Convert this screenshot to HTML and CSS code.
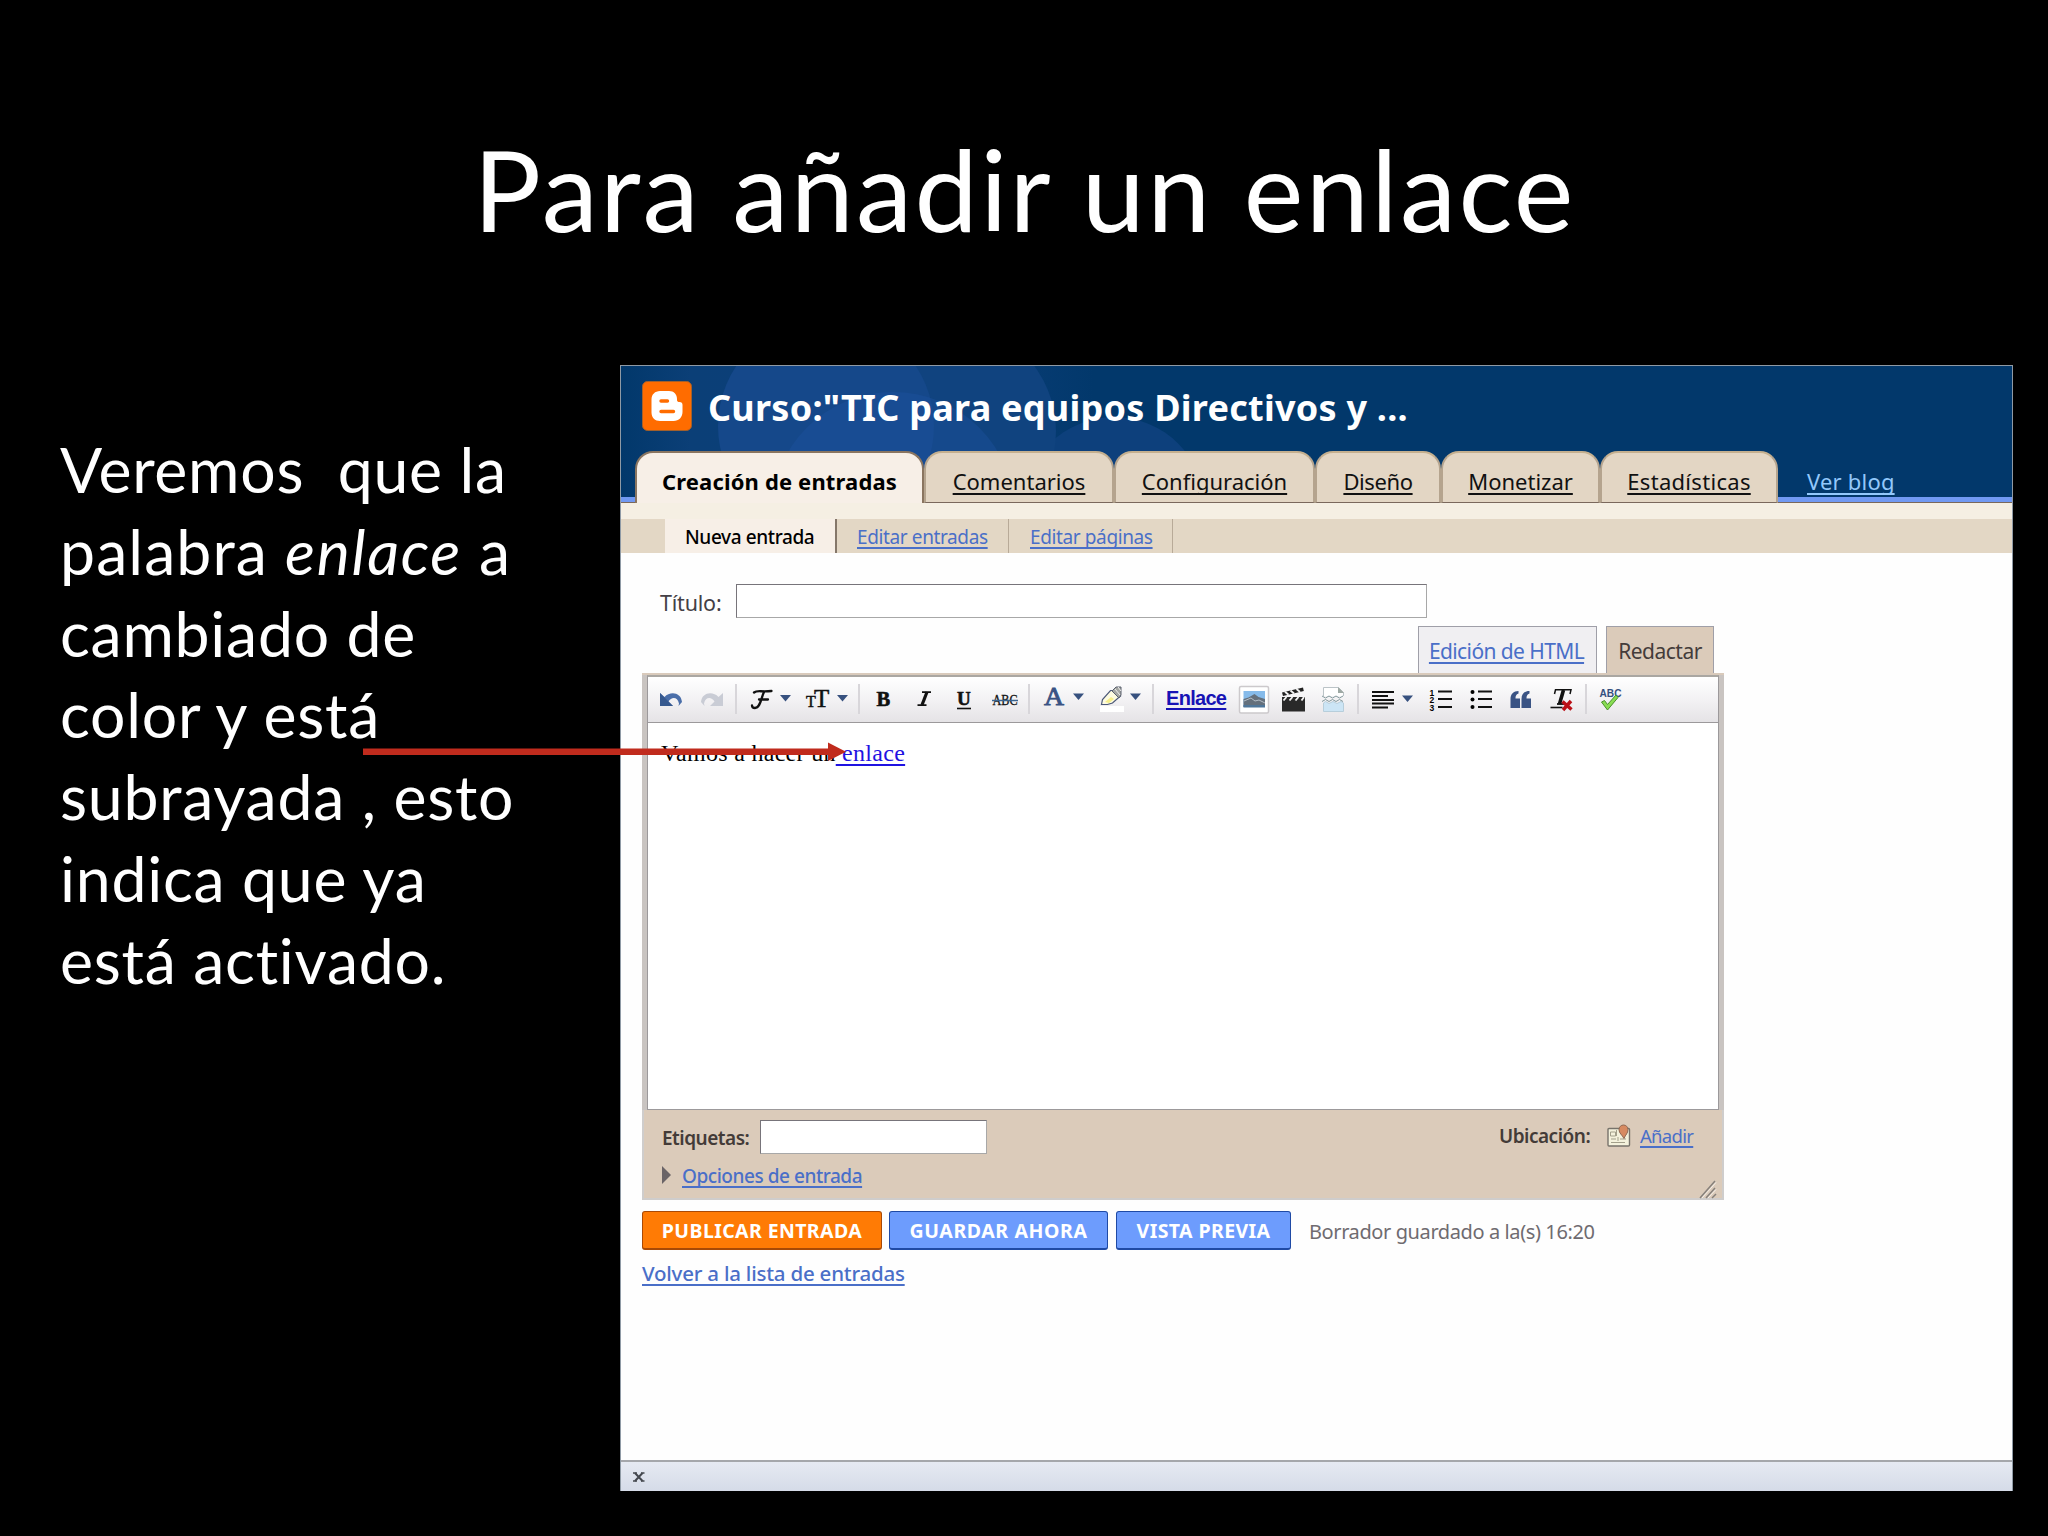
FILE: index.html
```html
<!DOCTYPE html>
<html lang="es">
<head>
  <meta charset="UTF-8">
  <title>Para añadir un enlace</title>
  <link rel="stylesheet" href="styles.css">
</head>
<body>
  <div class="slide">
    <h1>Para añadir un enlace</h1>

    <div class="content">
      <div class="note">
        Veremos&nbsp; que la<br>
        <span class="wide">palabra <em>enlace</em> a</span><br>
        cambiado de<br>
        color y está<br>
        subrayada , esto<br>
        indica que ya<br>
        está activado.
      </div>

      <div class="window">
        <div class="header">
          <svg class="circles" width="1391" height="131" viewBox="0 0 1391 131">
            <defs>
              <linearGradient id="glow" x1="0" x2="1" y1="0" y2="0">
                <stop offset="0" stop-color="#02386b"/>
                <stop offset="0.05" stop-color="#0b3f77"/>
                <stop offset="0.24" stop-color="#0b3f7a"/>
                <stop offset="0.34" stop-color="#02386b"/>
              </linearGradient>
            </defs>
            <rect width="1391" height="131" fill="url(#glow)"/>
            <circle cx="493" cy="142" r="91" fill="#0d407c"/>
            <circle cx="327" cy="65" r="108" fill="#10437f"/>
            <circle cx="205" cy="60" r="108" fill="#15488a"/>
            <circle cx="272" cy="148" r="122" fill="#1d52a0" opacity="0.4"/>
          </svg>
          <div class="brand">
            <svg class="logo" width="50" height="50" viewBox="0 0 50 50">
              <rect x="0.5" y="0.5" width="49" height="49" rx="5" fill="#ff6c00" stroke="#a2602c"/>
              <path d="M18 10h9c5 0 8 3.500 8 8v1c0 1.500 1 2 2.500 2 2 0 3 1 3 3v7c0 5-3.500 9-9 9H18c-5 0-8.500-3.500-8.500-8.500V18.500C9.500 13.500 13 10 18 10z" fill="#fff"/>
              <path d="M19 20h6.500M19 30.500h12.500" stroke="#ff6c00" stroke-width="3.400" stroke-linecap="round"/>
            </svg>
            <span class="blog-title">Curso:"TIC para equipos Directivos y ...</span>
          </div>
          <div class="tabs">
            <div class="tab active creacion">Creación de entradas</div>
            <div class="tab comentarios"><a>Comentarios</a></div>
            <div class="tab configuracion"><a>Configuración</a></div>
            <div class="tab diseno"><a>Diseño</a></div>
            <div class="tab monetizar"><a>Monetizar</a></div>
            <div class="tab estadisticas"><a>Estadísticas</a></div>
            <a class="ver-blog">Ver blog</a>
          </div>
        </div>

        <div class="subtabs">
          <div class="subtab current">Nueva entrada</div>
          <div class="subtab entradas"><a>Editar entradas</a></div>
          <div class="subtab paginas"><a>Editar páginas</a></div>
        </div>

        <div class="main">
          <div class="title-row">
            <label>Título:</label>
            <div class="field title-field"></div>
          </div>

          <div class="modes">
            <div class="mode html-mode"><a>Edición de HTML</a></div>
            <div class="mode compose">Redactar</div>
          </div>

          <div class="editor">
            <div class="toolbar">
              <!-- undo / redo -->
              <svg width="42" height="45" viewBox="0 0 42 45">
                <path d="M11 16v13h13l-4.500-4.500c3-5 9-5 10.500 2l-.5 2.500 3.500-4C32 15 21 14 15.500 20z" fill="#4a6ea9"/>
                <path d="M11 16v13h13z" fill="#36598f"/>
              </svg>
              <svg width="44" height="45" viewBox="0 0 44 45">
                <path d="M32 16v13H19l4.500-4.500c-3-5-9-5-10.500 2l.5 2.500-3.500-4C11 15 22 14 27.500 20z" fill="#c9ccd5"/>
              </svg>
              <i class="sep"></i>
              <svg width="59" height="45" viewBox="0 0 59 45">
                <path d="M17 15.500c3-2.500 6-.5 17.500-1.500M27 15c-3 6-3.500 16-9 16-2 0-3-1-3-2.500M22 22.500h9" fill="none" stroke="#111" stroke-width="2.300" stroke-linecap="round"/>
                <path d="M43 18h11l-5.500 6.500z" fill="#37517f"/>
              </svg>
              <svg width="62" height="45" viewBox="0 0 62 45">
                <text x="10" y="30" class="serif" font-size="16">T</text>
                <text x="18" y="30" class="serif" font-size="25">T</text>
                <path d="M41 18h11l-5.500 6.500z" fill="#37517f"/>
              </svg>
              <i class="sep"></i>
              <svg width="44" height="45" viewBox="0 0 44 45">
                <text x="16.500" y="29" class="serif heavy" font-size="20.500">B</text>
              </svg>
              <svg width="40" height="45" viewBox="0 0 40 45">
                <path d="M18 15.200h9M13.500 28.200h9" stroke="#111" stroke-width="1.800"/>
                <path d="M23 15l-5 13" stroke="#111" stroke-width="3.200"/>
              </svg>
              <svg width="39" height="45" viewBox="0 0 39 45">
                <text x="13" y="28" class="serif heavy" font-size="19">U</text>
                <path d="M13 31.500h14" stroke="#111" stroke-width="1.600"/>
              </svg>
              <svg width="45" height="45" viewBox="0 0 45 45">
                <text x="9.500" y="28" class="serif strike" font-size="14.500" textLength="25" lengthAdjust="spacingAndGlyphs">ABC</text>
                <path d="M9 23.500h26" stroke="#3b6590" stroke-width="1.500"/>
              </svg>
              <i class="sep"></i>
              <svg width="62" height="45" viewBox="0 0 62 45">
                <text x="14" y="27.500" font-size="25" fill="#3a5384" class="serif-blue" textLength="20" lengthAdjust="spacingAndGlyphs">A</text>
                <path d="M43 16.500h11l-5.500 6.500z" fill="#37517f"/>
              </svg>
              <svg width="60" height="45" viewBox="0 0 60 45">
                <path d="M8 29h24v6H8z" fill="#fff"/>
                <path d="M9.500 27.500l1-5 8-9h4l6 5.500-8 7-5 1.500z" fill="#fdfbe0" stroke="#4b5878" stroke-width="1.200"/>
                <path d="M13 25l6-5 3 2-5 4z" fill="#f7ef8a"/>
                <path d="M20 14l4-4 5 0v8l-2 3z" fill="#a5a7a3" stroke="#5a616e"/>
                <path d="M23 12l5 6M26 10l3 4" stroke="#eee"/>
                <path d="M38 16.500h11l-5.500 6.500z" fill="#37517f"/>
              </svg>
              <i class="sep"></i>
              <a class="link-button">Enlace</a>
              <!-- image -->
              <svg width="39" height="45" viewBox="0 0 39 45">
                <rect x="5.500" y="9.500" width="29" height="26.500" rx="1.500" fill="#fff" stroke="#ccc9cc" stroke-width="1.500"/>
                <rect x="9.500" y="14" width="21.500" height="16" fill="#86bbea"/>
                <path d="M9.500 22l5-1.500 6-3.500 4 3 6.500 2v8H9.500z" fill="#64707c"/>
                <path d="M10 24l7-3 4 3 4-1 6 3" stroke="#b3bdc6" fill="none"/>
                <path d="M9.500 28h21.500v2.500H9.500z" fill="#4f7699"/>
              </svg>
              <!-- video -->
              <svg width="40" height="45" viewBox="0 0 40 45">
                <path d="M9 20h23v14.500H9z" fill="#292929"/>
                <path d="M9 15.500l21-5 .8 3.500L10 19z" fill="#222"/>
                <path d="M12 14.800l3.500 3M17.500 13.500l3.500 3M23.500 12l3.500 3M13.500 20l-3 3.500M19.500 20l-3 3.500M25.500 20l-3 3.500M31 20l-2.500 3.500" stroke="#f2f2f2" stroke-width="1.900"/>
              </svg>
              <!-- page break -->
              <svg width="44" height="45" viewBox="0 0 44 45">
                <path d="M10.500 19v-8.500h15l5 5V19" fill="#fff" stroke="#bbc3c7"/>
                <path d="M25 10l6 6h-6z" fill="#9ea9a4"/>
                <path d="M10.500 26v8.500h20V26l-2.500-1.500-4 2-4-2-4 2-3.500-2z" fill="#cce5f5" stroke="#b7cedb"/>
                <path d="M9 19l3.500 2 3.500-2 3.500 2 3.500-2 3.500 2 3.500-2M9 24.500l3.500-2 3.500 2 3.500-2 3.500 2 3.500-2 3.500 2" stroke="#83999d" fill="none"/>
              </svg>
              <i class="sep"></i>
              <svg width="62" height="45" viewBox="0 0 62 45">
                <path d="M13 15h22M13 19h16M13 23h22M13 26.500h22M13 30.500h16" stroke="#111" stroke-width="1.800"/>
                <path d="M43 18.500h11l-5.500 6.500z" fill="#37517f"/>
              </svg>
              <svg width="40" height="45" viewBox="0 0 40 45">
                <text x="8.500" y="18.500" class="num">1</text>
                <text x="8.500" y="26" class="num">2</text>
                <text x="8.500" y="34" class="num">3</text>
                <path d="M17 14.500h14M17 22h14M17 30h14" stroke="#111" stroke-width="1.900"/>
              </svg>
              <svg width="40" height="45" viewBox="0 0 40 45">
                <path d="M17 14.500h14M17 22h14M17 30h14" stroke="#111" stroke-width="1.900"/>
                <circle cx="11.500" cy="15" r="2"/>
                <circle cx="11.500" cy="22.500" r="2"/>
                <circle cx="11.500" cy="30" r="2"/>
              </svg>
              <svg width="40" height="45" viewBox="0 0 40 45">
                <path d="M9.500 31V22c0-5 3-8 8-8v2.500c-2.500 1-3 2.500-3 5H19V31zM20.500 31V22c0-5 3-8 8-8v2.500c-2.500 1-3 2.500-3 5H30V31z" fill="#3a5384"/>
              </svg>
              <svg width="44" height="45" viewBox="0 0 44 45">
                <path d="M13.500 17l1-4.200h15.500l-1 4.200" fill="none" stroke="#111" stroke-width="1.500"/>
                <path d="M16 27h7" stroke="#111" stroke-width="1.800"/>
                <path d="M22.500 13l-4 14" stroke="#111" stroke-width="3.600"/>
                <path d="M9.500 30.500h12" stroke="#111" stroke-width="1.600"/>
                <path d="M21.500 24.500l9 8M30 24l-8 9" stroke="#bb1017" stroke-width="3.400"/>
              </svg>
              <i class="sep"></i>
              <svg width="50" height="45" viewBox="0 0 50 45">
                <text x="12.500" y="20" class="spell" textLength="22" lengthAdjust="spacingAndGlyphs">ABC</text>
                <path d="M14.500 25l3-1.500 3 4 8.500-9.500 2 2.500-10.500 12.500z" fill="#88dd52" stroke="#4b8f2c"/>
              </svg>
            </div>

            <div class="text-area">Vamos a hacer un<a> enlace</a></div>

            <div class="post-options">
              <div class="labels-row">
                <label>Etiquetas:</label>
                <div class="field labels-field"></div>
                <span class="location">Ubicación:</span>
                <svg class="map" width="24" height="24" viewBox="0 0 24 24">
                  <rect x="1" y="4.500" width="21.500" height="17.500" rx="1" fill="#f4f2dc" stroke="#77736b" stroke-width="1.400"/>
                  <path d="M3.500 8h5v4h-5zM4 15h5M11 13v4M4 18.500h14M13 15h6M9.500 6v6" fill="none" stroke="#a3a08b"/>
                  <path d="M12 5.500a4.500 4.500 0 0 1 9 0c0 4-2.500 5-4 9-2-4-5-5-5-9z" fill="#d78a61" stroke="#8f6954"/>
                </svg>
                <a class="add">Añadir</a>
              </div>
              <div class="options-row">
                <i class="triangle"></i>
                <a>Opciones de entrada</a>
                <svg class="grip" width="20" height="19" viewBox="0 0 20 19">
                  <path d="M2 18L17 1M8 18l9-10M14 18l4-4" stroke="#86807b" stroke-width="1.500"/>
                  <path d="M4 18L18 2.500M10 18l8-8.500" stroke="#f6f0ea"/>
                </svg>
              </div>
            </div>
          </div>

          <div class="actions">
            <div class="button publish">PUBLICAR ENTRADA</div>
            <div class="button save">GUARDAR AHORA</div>
            <div class="button preview">VISTA PREVIA</div>
            <span class="status">Borrador guardado a la(s) 16:20</span>
          </div>
          <a class="back">Volver a la lista de entradas</a>
        </div>

        <div class="statusbar">
          <svg width="12" height="10" viewBox="0 0 12 10">
            <path d="M2 1l7.500 8M9.500 1L2 9" stroke="#44484f" stroke-width="2"/>
            <path d="M0 1h4M8 1h3.500M0 9h4M8 9h3.500" stroke="#44484f" stroke-width="1.500"/>
          </svg>
        </div>
      </div>
    </div>

    <svg class="arrow" width="484" height="20" viewBox="0 0 484 20">
      <path d="M0 6.500h465V0.500l18 9.300-18 9.200v-6H0z" fill="#c02b1d"/>
    </svg>
  </div>
</body>
</html>
```
FILE: styles.css
```css
* {
  box-sizing: border-box;
}

body {
  margin: 0;
  background: #000;
}

.slide {
  position: relative;
  width: 2048px;
  height: 1536px;
  overflow: hidden;
  background: #000;
  color: #fff;
  font-family: Lato, sans-serif;
}

h1 {
  margin: 0;
  height: 365px;
  padding: 118px 0 0 1px;
  font-size: 113px;
  font-weight: 400;
  line-height: 140px;
  letter-spacing: 2.3px;
  text-align: center;
}

.content {
  display: flex;
}

.note {
  width: 620px;
  padding: 63px 0 0 60px;
  font-size: 62.5px;
  line-height: 81.8px;
  letter-spacing: 0.75px;
  white-space: nowrap;
}

.note .wide {
  letter-spacing: 1.1px;
}

.note em {
  letter-spacing: 1.7px;
}

.window {
  display: flex;
  flex-direction: column;
  width: 1393px;
  height: 1126px;
  border: 1px solid #8f9aa5;
  border-bottom: 0;
  background: #fefefe;
  color: #000;
  font-family: "Noto Sans", sans-serif;
}

.window a {
  color: #4a6fc8;
  text-decoration: underline;
  text-decoration-thickness: 1.5px;
  text-underline-offset: 3px;
  text-decoration-skip-ink: none;
}

/* header */
.header {
  position: relative;
  height: 137px;
  background: #02386b;
}

.circles {
  position: absolute;
  top: 0;
  left: 0;
}

.brand {
  position: relative;
  display: flex;
  height: 85px;
  padding: 15px 0 0 21px;
}

.blog-title {
  margin-left: 16px;
  padding-top: 1px;
  color: #fff;
  font-size: 36px;
  font-weight: 700;
  line-height: 52px;
  letter-spacing: 0.25px;
}

.tabs {
  position: relative;
  display: flex;
  height: 52px;
  padding-left: 14px;
  background: linear-gradient(transparent 46px, #7199f2 46px, #7199f2 51px, #7a685c 51px);
}

.tab {
  height: 52px;
  padding-top: 10px;
  border: 2px solid #b5a48e;
  border-top-color: #c5b08f;
  border-bottom: 1px solid #7a685c;
  border-radius: 18px 18px 0 0;
  background: #e3d6c4;
  font-size: 22px;
  line-height: 36px;
  text-align: center;
  white-space: nowrap;
}

.tab a {
  color: #111;
}

.tab.active {
  border-color: #8a7560;
  border-bottom: 0;
  background: #f7efe7;
  font-weight: 700;
  letter-spacing: 0.15px;
}

.creacion { width: 289px; }
.comentarios { width: 190px; }
.configuracion { width: 201px; }
.diseno { width: 126px; letter-spacing: -0.4px; }
.monetizar { width: 159px; }
.estadisticas { width: 178px; letter-spacing: 0.3px; }

.window .ver-blog {
  margin-left: 29px;
  color: #93c8fb;
  font-size: 22px;
  line-height: 60px;
  letter-spacing: 0.2px;
}

/* second row of tabs */
.subtabs {
  display: flex;
  height: 50px;
  padding: 16px 0 0 44px;
  background: linear-gradient(#f5efe3 16px, #e3d7c5 16px);
}

.subtab {
  padding-left: 20px;
  border-right: 1px solid #b8aa98;
  font-size: 19px;
  line-height: 36px;
  letter-spacing: -0.38px;
}

.current {
  width: 172px;
  border-right: 2px solid #85776a;
  background: #f7efe7;
  font-weight: 500;
}

.entradas { width: 172px; }
.paginas { width: 164px; padding-left: 21px; }

/* post form */
.main {
  flex: 1;
  padding: 31px 0 0 21px;
}

.title-row {
  display: flex;
  height: 42px;
}

.title-row label {
  width: 94px;
  padding-left: 18px;
  color: #444046;
  font-size: 21.5px;
  line-height: 37px;
  letter-spacing: -0.2px;
}

.field {
  border: 1px solid #a8a8a8;
  border-top-color: #77747a;
  border-left-color: #77747a;
  background: #fff;
}

.title-field {
  width: 691px;
  height: 34px;
}

.modes {
  display: flex;
  gap: 9px;
  height: 47px;
  padding-left: 776px;
}

.mode {
  border: 1px solid #9f9fa8;
  border-bottom: 0;
  font-size: 21px;
  line-height: 48px;
  letter-spacing: -0.5px;
  text-align: center;
}

.html-mode {
  width: 179px;
  padding-right: 2px;
  background: #f0eff2;
}

.html-mode a {
  letter-spacing: -0.6px;
}

.compose {
  width: 108px;
  background: #dbcbba;
  color: #443c3a;
}

.editor {
  width: 1082px;
  height: 527px;
  border-top: 2px solid #d9cabb;
  background: #c9c4c1;
}

.toolbar {
  display: flex;
  width: 1072px;
  height: 48px;
  margin: 0 0 0 5px;
  padding-left: 1px;
  border: 1px solid #9c999b;
  border-top: 2px solid #aaa7a2;
  background: linear-gradient(#fff, #f3f2f4 50%, #e5e3e6);
}

.toolbar svg {
  flex: none;
}

.sep {
  width: 2px;
  height: 30px;
  margin-top: 7px;
  background: #d8d6da;
}

.serif {
  fill: #111;
  stroke: #111;
  stroke-width: 0.5px;
  font-family: "Liberation Serif", serif;
}

.strike {
  stroke-width: 0.3px;
}

.serif-blue {
  font-family: "Liberation Serif", serif;
}

.heavy {
  font-weight: 700;
  stroke-width: 0.6px;
}

.serif-blue {
  stroke: #3a5384;
  stroke-width: 0.8px;
}

.num {
  font: 700 8.5px "Liberation Sans", sans-serif;
}

.spell {
  fill: #35507f;
  font: 700 10.5px "Liberation Sans", sans-serif;
}

.toolbar .link-button {
  width: 80px;
  padding-left: 12px;
  color: #1713b5;
  font: 700 20px/42px "Liberation Sans", sans-serif;
  letter-spacing: -0.7px;
  text-decoration-thickness: 2px;
}

.text-area {
  width: 1072px;
  height: 387px;
  margin-left: 5px;
  padding: 16px 0 0 13px;
  border: 1px solid #9c999b;
  border-top: 0;
  background: #fff;
  font: 24px/28px "Liberation Serif", serif;
  letter-spacing: 0.3px;
}

.text-area a {
  color: #1f12e2;
}

.post-options {
  height: 90px;
  border: 2px solid #cfcdcc;
  border-top: 0;
  background: #dbcbba;
}

.labels-row {
  display: flex;
  height: 52px;
  padding: 10px 0 0 18px;
  color: #433b38;
  font-size: 19px;
  font-weight: 600;
  letter-spacing: -0.5px;
}

.labels-row label {
  width: 98px;
  line-height: 37px;
}

.labels-field {
  width: 227px;
  height: 34px;
}

.location {
  margin-left: 512px;
  width: 108px;
  line-height: 33px;
}

.map {
  margin-top: 4px;
}

.labels-row .add {
  margin-left: 9px;
  font-size: 18.5px;
  font-weight: 400;
  line-height: 31px;
  letter-spacing: -0.7px;
}

.options-row {
  display: flex;
  padding: 1px 4px 0 18px;
  font-size: 19px;
  font-weight: 500;
  line-height: 26px;
  letter-spacing: -0.45px;
}

.triangle {
  width: 0;
  height: 0;
  margin: 3px 11px 0 0;
  border: solid transparent;
  border-width: 9px 0 9px 9px;
  border-left-color: #6a6467;
}

.grip {
  margin: 17px 0 0 auto;
}

.actions {
  display: flex;
  height: 39px;
  margin-top: 11px;
}

.button {
  border: 1.5px solid #1f4aa5;
  border-bottom-width: 2px;
  border-radius: 3px;
  background: #6d9cfd;
  color: #fff;
  font-size: 19.5px;
  font-weight: 700;
  line-height: 37px;
  letter-spacing: 0.4px;
  text-align: center;
}

.publish {
  width: 240px;
  border-color: #a94a06;
  background: #ff7b05;
}

.save {
  width: 219px;
  margin: 0 8px 0 7px;
  letter-spacing: 0.6px;
}

.preview {
  width: 175px;
}

.status {
  margin-left: 18px;
  color: #6f6b70;
  font-size: 20px;
  line-height: 42px;
  letter-spacing: -0.4px;
}

.window .back {
  display: block;
  margin-top: 8px;
  font-size: 20.5px;
  font-weight: 500;
  line-height: 30px;
  letter-spacing: -0.22px;
}

.statusbar {
  height: 31px;
  padding: 10px 0 0 12px;
  border-top: 2px solid #a5a7ab;
  background: linear-gradient(#e6eaf2, #d5dbe8);
  line-height: 0;
}

/* arrow over the note and the editor */
.arrow {
  position: absolute;
  top: 742px;
  left: 363px;
}
```
